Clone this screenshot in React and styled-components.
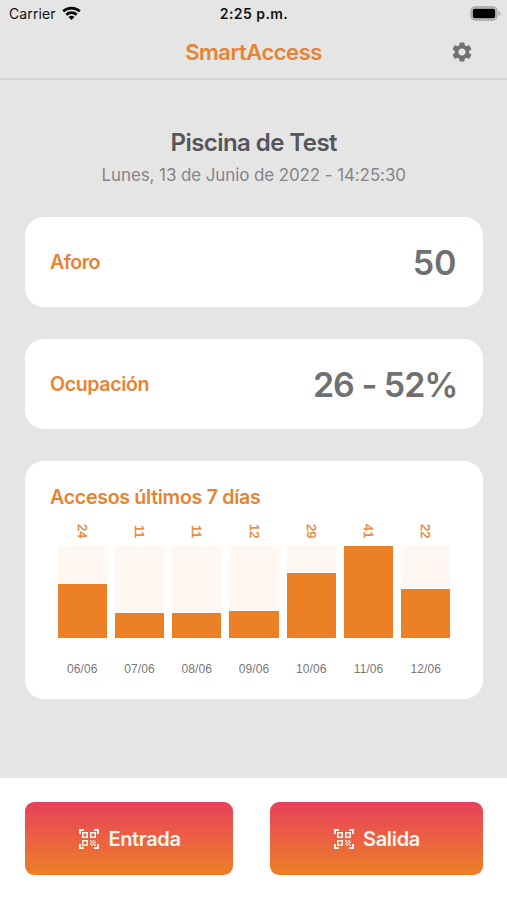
import React from "react";
import styled, { createGlobalStyle } from "styled-components";
import { MdQrCodeScanner, MdSettings } from "react-icons/md";

const GlobalStyle = createGlobalStyle`
  * { box-sizing: border-box; }
  body { margin: 0; background: #e5e5e5; }
`;

const Screen = styled.div`
  display: flex;
  flex-direction: column;
  height: 900px;
  width: 507px;
  overflow: hidden;
  background: #e5e5e5;
  font-family: Inter, sans-serif;
  white-space: nowrap;
`;

const StatusBar = styled.div`
  display: grid;
  grid-template-columns: 1fr auto 1fr;
  align-items: center;
  height: 27px;
  padding: 0 6px 0 9px;
  color: #111;
`;

const Carrier = styled.div`
  display: flex;
  align-items: center;
  gap: 6px;
  font-size: 14px;
  letter-spacing: 0.1px;
`;

const Clock = styled.div`
  margin-right: 2px;
  font-size: 14px;
  font-weight: 600;
  letter-spacing: 0.45px;
`;

const Battery = styled.svg`
  justify-self: end;
  display: block;
`;

const NavBar = styled.header`
  display: grid;
  grid-template-columns: 1fr auto 1fr;
  align-items: center;
  height: 53px;
  padding: 0 33px 2px;
  border-bottom: 2px solid #d6d6d6;
`;

const NavTitle = styled.h1`
  grid-column: 2;
  margin: 0;
  color: #e8822f;
  font-size: 22px;
  font-weight: 600;
  letter-spacing: -0.5px;
`;

const SettingsButton = styled.button`
  justify-self: end;
  display: flex;
  padding: 0;
  border: 0;
  background: none;
  color: #717175;
`;

const Content = styled.main`
  flex: 1;
  display: flex;
  flex-direction: column;
  gap: 32px;
  padding: 48px 24.5px 0 25px;
`;

const Heading = styled.div`
  display: flex;
  flex-direction: column;
  align-items: center;
  height: 57px;
`;

const Place = styled.h2`
  margin: 0;
  color: #56565a;
  font-size: 24px;
  font-weight: 600;
  line-height: 30px;
  letter-spacing: -0.55px;
`;

const DateLine = styled.div`
  margin-top: 6px;
  color: #858588;
  font-size: 17px;
  line-height: 22px;
  letter-spacing: -0.11px;
`;

const StatCard = styled.section`
  display: flex;
  align-items: center;
  justify-content: space-between;
  height: 90px;
  padding: 0 26px 0 25px;
  border-radius: 19px;
  background: #fff;
`;

const Label = styled.h3`
  margin: 0;
  color: #e8822f;
  font-size: 19.6px;
  font-weight: 600;
  line-height: 24px;
  letter-spacing: ${(p) => p.$track || 0}px;
`;

const Value = styled.div`
  margin-right: ${(p) => p.$track || 0}px;
  color: #707073;
  font-size: 34px;
  font-weight: 600;
  letter-spacing: ${(p) => p.$track || 0}px;
`;

const ChartCard = styled.section`
  height: 238px;
  padding: 24px 32px 0 25px;
  border-radius: 19px;
  background: #fff;
`;

const Chart = styled.div`
  display: grid;
  grid-template-columns: repeat(7, 49.3px);
  justify-content: space-between;
  padding-left: 7.6px;
  margin-top: 10px;
`;

const Day = styled.div`
  display: flex;
  flex-direction: column;
  align-items: center;
`;

const Count = styled.div`
  display: flex;
  align-items: center;
  justify-content: center;
  height: 27.4px;
  padding-bottom: 2px;
  margin-right: 1px;
  writing-mode: vertical-rl;
  color: #e8822f;
  font-family: "Liberation Sans", sans-serif;
  font-size: 13px;
  line-height: 14px;
  -webkit-text-stroke: 0.3px #e8822f;
`;

const Track = styled.div`
  display: flex;
  align-items: flex-end;
  width: 100%;
  height: 91.6px;
  background: #fff7f1;
`;

const Bar = styled.div`
  width: 100%;
  background: #ec8027;
`;

const DayLabel = styled.div`
  margin-top: 24px;
  color: #77777a;
  font-family: "Liberation Sans", sans-serif;
  font-size: 12px;
  line-height: 14px;
  letter-spacing: 0.1px;
`;

const Footer = styled.footer`
  display: grid;
  grid-template-columns: 208px 213px;
  justify-content: space-between;
  height: 122.4px;
  padding: 24.5px 24.5px 0 25px;
  background: #fff;
`;

const ScanButton = styled.button`
  display: flex;
  align-items: center;
  justify-content: center;
  gap: 7px;
  height: 72.6px;
  padding: 1px 0 0;
  border: 0;
  border-radius: 9px;
  background: linear-gradient(#e8405c, #ee8027);
  color: #fff4ee;
  font: 600 20px Inter, sans-serif;
  letter-spacing: -0.35px;
`;

const days = [
  ["06/06", 24],
  ["07/06", 11],
  ["08/06", 11],
  ["09/06", 12],
  ["10/06", 29],
  ["11/06", 41],
  ["12/06", 22],
];
const peak = Math.max(...days.map(([, count]) => count));

function WifiIcon() {
  return (
    <svg width="19" height="15" viewBox="0 0 19 15" fill="none" stroke="#090909" strokeWidth="2.7">
      <path d="M1.2 5.4a11.9 11.9 0 0 1 16.6 0" />
      <path d="M4.3 8.7a7.5 7.5 0 0 1 10.4 0" />
      <path d="M9.5 14.1 6.5 11.1a4.3 4.3 0 0 1 6 0z" fill="#090909" stroke="none" />
    </svg>
  );
}

export default function App() {
  return (
    <Screen>
      <GlobalStyle />
      <StatusBar>
        <Carrier>
          <span>Carrier</span>
          <WifiIcon />
        </Carrier>
        <Clock>2:25 p.m.</Clock>
        <Battery width="31" height="15" viewBox="0 0 31 15">
          <rect x="1" y="1" width="26" height="13" rx="4" fill="#d0d0d0" stroke="#a4a4a4" strokeWidth="1.3" />
          <rect x="2.8" y="2.8" width="22.4" height="9.4" rx="1.8" fill="#000" />
          <path d="M28.6 5v5c2.4-1 2.4-4 0-5z" fill="#a4a4a4" />
        </Battery>
      </StatusBar>
      <NavBar>
        <NavTitle>SmartAccess</NavTitle>
        <SettingsButton aria-label="Ajustes">
          <MdSettings size={24} />
        </SettingsButton>
      </NavBar>
      <Content>
        <Heading>
          <Place>Piscina de Test</Place>
          <DateLine>Lunes, 13 de Junio de 2022 - 14:25:30</DateLine>
        </Heading>
        <StatCard>
          <Label $track={-0.5}>Aforo</Label>
          <Value>50</Value>
        </StatCard>
        <StatCard>
          <Label $track={-0.4}>Ocupación</Label>
          <Value $track={-1}>26 - 52%</Value>
        </StatCard>
        <ChartCard>
          <Label $track={-0.3}>Accesos últimos 7 días</Label>
          <Chart>
            {days.map(([day, count]) => (
              <Day key={day}>
                <Count>{count}</Count>
                <Track>
                  <Bar style={{ height: `${(count / peak) * 100}%` }} />
                </Track>
                <DayLabel>{day}</DayLabel>
              </Day>
            ))}
          </Chart>
        </ChartCard>
      </Content>
      <Footer>
        <ScanButton>
          <MdQrCodeScanner size={24} />
          Entrada
        </ScanButton>
        <ScanButton>
          <MdQrCodeScanner size={24} />
          Salida
        </ScanButton>
      </Footer>
    </Screen>
  );
}
